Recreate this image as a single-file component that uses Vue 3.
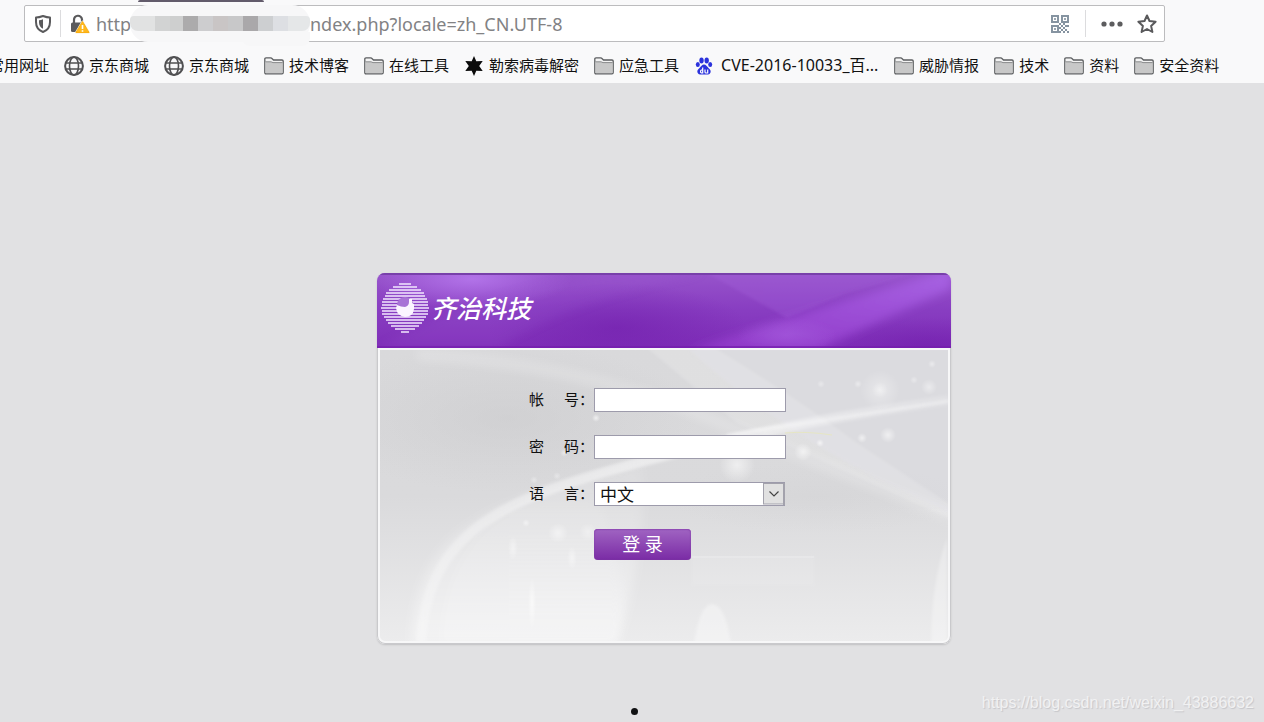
<script setup>
import { ref } from 'vue'

const address = ref('ndex.php?locale=zh_CN.UTF-8')
const account = ref('')
const password = ref('')
const language = ref('zh')

const bookmarks = [
  { icon: '', text: '常用网址' },
  { icon: 'globe', text: '京东商城' },
  { icon: 'globe', text: '京东商城' },
  { icon: 'folder', text: '技术博客' },
  { icon: 'folder', text: '在线工具' },
  { icon: 'star', text: '勒索病毒解密' },
  { icon: 'folder', text: '应急工具' },
  { icon: 'paw', text: 'CVE-2016-10033_百...', wide: true },
  { icon: 'folder', text: '威胁情报' },
  { icon: 'folder', text: '技术' },
  { icon: 'folder', text: '资料' },
  { icon: 'folder', text: '安全资料' }
]

const mosaic = [
  ['#e1e2e2', 25], ['#d2d3d3', 15], ['#cecfcf', 14], ['#acabac', 15], ['#cdcdcf', 15],
  ['#c9c5c5', 15], ['#c8c8c9', 15], ['#aaa8aa', 15], ['#cdcfd1', 16], ['#dddfe3', 15], ['#e5e7e8', 22]
]

const qr = [
  '1111.1111', '1..1.1..1', '1..1.1..1', '1111.1111', '....1.1..',
  '1111.1.11', '1..11.1..', '1..1.1.1.', '11111.1.1'
]
const qrCells = qr.flatMap((row, y) => [...row].map((c, x) => ({ c, x: x * 2, y: y * 2 }))).filter(p => p.c === '1')

const sparks = [
  [503, 117, 20, 0.5], [503, 117, 8, 0.5], [552, 114, 8, 0.6], [555, 91, 4, 0.6], [537, 107, 4, 0.5],
  [481, 111, 4, 0.6], [444, 111, 4, 0.5], [511, 162, 8, 0.8], [485, 165, 5, 0.8], [443, 170, 4, 0.9],
  [426, 179, 9, 0.8], [360, 192, 18, 0.8], [219, 145, 4, 0.9], [187, 180, 4, 0.7], [157, 207, 4, 0.5],
  [180, 203, 4, 0.5], [149, 250, 4, 0.7], [181, 260, 10, 0.7], [211, 259, 9, 0.5]
]

const rings = [
  [1, 6], [4, 12], [7, 16], [10, 19], [13, 20], [16, 22], [19, 23], [22, 23],
  [25, 24], [28, 23], [31, 23], [34, 21], [37, 19], [40, 17], [43, 14], [46, 10], [49, 4]
]
</script>

<template>
  <div class="page">
    <header class="browser">
      <div class="tab-edge"></div>
      <div class="urlbar">
        <button class="tool shield" aria-label="Tracking protection">
          <svg width="18" height="20" viewBox="0 0 18 20">
            <path d="M9 2 Q5 3.500 2 3.500 V8 C2 13 5 16.500 9 18 C13 16.500 16 13 16 8 V3.500 Q13 3.500 9 2Z" fill="none" stroke="#5a5a5c" stroke-width="2" stroke-linejoin="round" />
            <path d="M9 5.200 Q7 6.200 5 6.300 V8.500 C5 11.500 6.500 13.500 9 14.800Z" fill="#5a5a5c" />
          </svg>
        </button>
        <span class="rule"></span>
        <button class="tool lock" aria-label="Connection">
          <svg width="20" height="20" viewBox="0 0 20 20">
            <path d="M4 9 V6 A4 4 0 0 1 12 5.500 V9" fill="none" stroke="#5a5a5c" stroke-width="2.200" />
            <rect x="1" y="8.500" width="12.500" height="9.500" rx="1.500" fill="#5a5a5c" />
            <path d="M12.500 7.500 L19 18.500 H6 Z" fill="#ffb81c" stroke="#f8f0dc" stroke-width="2" stroke-linejoin="round" />
            <path d="M12.500 7.500 L19 18.500 H6 Z" fill="#ffb81c" stroke="#f9ae12" stroke-width="1" stroke-linejoin="round" />
            <path d="M12.500 11 V15 M12.500 16.200 V17.700" stroke="#fff" stroke-width="1.600" />
          </svg>
        </button>
        <label class="scheme" for="address">http</label>
        <span class="mask">
          <i v-for="(m, k) in mosaic" :key="k" :style="{ background: m[0], flexGrow: m[1] }"></i>
        </span>
        <input id="address" v-model="address" class="address" type="text" spellcheck="false" />
        <button class="tool" aria-label="QR code">
          <svg width="18" height="18" viewBox="0 0 18 18">
            <rect v-for="(p, k) in qrCells" :key="k" :x="p.x" :y="p.y" width="2" height="2" fill="#8694a1" />
            <path d="M3.500 3.500h1v1h-1z M13.500 3.500h1v1h-1z M3.500 13.500h1v1h-1z" fill="#75838f" stroke="#8694a1" />
          </svg>
        </button>
        <span class="rule right"></span>
        <button class="tool dots" aria-label="More">
          <svg width="22" height="6" viewBox="0 0 22 6" fill="#5c5c5e">
            <circle cx="3" cy="3" r="2.600" /><circle cx="11" cy="3" r="2.600" /><circle cx="19" cy="3" r="2.600" />
          </svg>
        </button>
        <button class="tool" aria-label="Bookmark">
          <svg width="20" height="20" viewBox="0 0 20 20">
            <path d="M10 1.500 L12.500 7 L18.600 7.700 L14.100 11.900 L15.400 18 L10 15 L4.600 18 L5.900 11.900 L1.400 7.700 L7.500 7 Z" fill="none" stroke="#5a5a5c" stroke-width="2" stroke-linejoin="round" />
          </svg>
        </button>
      </div>
      <nav class="bookmarks">
        <a v-for="(b, k) in bookmarks" :key="k" href="#" :class="{ wide: b.wide }">
          <svg v-if="b.icon === 'globe'" width="20" height="20" viewBox="0 0 20 20" fill="none" stroke="#505052" stroke-width="1.600">
            <circle cx="10" cy="10" r="8.900" stroke-width="2" />
            <ellipse cx="10" cy="10" rx="4.500" ry="8.900" />
            <path d="M1.500 7 H18.500 M1.500 13 H18.500" />
          </svg>
          <svg v-else-if="b.icon === 'folder'" width="20" height="20" viewBox="0 0 20 20">
            <path d="M.8 16.500 V3 Q.8 1.800 2 1.800 H6.500 Q7.500 1.800 8.500 3 L9.500 4 H18 Q19.200 4 19.200 5 V16.500 Q19.200 17.800 18 17.800 H2 Q.8 17.800 .8 16.500Z" fill="#f3f3f3" stroke="#5c5e60" stroke-width="1.300" />
            <path d="M1.500 6 H7 L9 6.800 H18.500 V17 H1.500Z" fill="#c8c8c8" />
            <path d="M1.500 5.800 H7 L9 6.600 H18.500" fill="none" stroke="#88898b" />
          </svg>
          <svg v-else-if="b.icon === 'star'" width="20" height="20" viewBox="0 0 20 20">
            <path d="M10 0 L12.300 5.300 L18.700 5 L15.200 10 L18.700 15 L12.300 14.700 L10 20 L7.700 14.700 L1.300 15 L4.800 10 L1.300 5 L7.700 5.300Z" fill="#0b0b0b" />
          </svg>
          <svg v-else-if="b.icon === 'paw'" width="20" height="20" viewBox="0 0 20 20" fill="#2b32dc">
            <ellipse cx="7.500" cy="4.500" rx="2.200" ry="2.900" />
            <ellipse cx="12.700" cy="4.500" rx="2.200" ry="2.900" />
            <ellipse cx="3.800" cy="8.500" rx="2" ry="2.600" />
            <ellipse cx="16.200" cy="8.500" rx="2" ry="2.600" />
            <path d="M10 8.500 C12 8.500 13 10.500 14.500 12 C16.500 13.800 17 15 16.500 16.500 C15.800 19 13 18.500 10 18.500 C7 18.500 4.200 19 3.500 16.500 C3 15 3.500 13.800 5.500 12 C7 10.500 8 8.500 10 8.500Z" />
            <path d="M8.700 11.500 V17 H7.500 A1.600 1.600 0 1 1 8.700 14 M11 13.500 V16 Q11 17 12 17 H13.700 V13.500" fill="none" stroke="#fff" stroke-width="1.200" />
          </svg>
          <span>{{ b.text }}</span>
        </a>
      </nav>
    </header>

    <main class="stage">
      <section class="card">
        <svg class="art" viewBox="0 0 574 371" preserveAspectRatio="none" aria-hidden="true">
          <defs>
            <linearGradient id="purple" x1="0" y1="0" x2="0" y2="1">
              <stop offset="0" stop-color="#9754cb" /><stop offset=".5" stop-color="#883dc1" /><stop offset="1" stop-color="#7f2eb8" />
            </linearGradient>
            <linearGradient id="grey" x1="0" y1="0" x2="0" y2="1">
              <stop offset="0" stop-color="#d9d9db" /><stop offset=".5" stop-color="#dadadc" /><stop offset="1" stop-color="#ececed" />
            </linearGradient>
            <linearGradient id="beam" x1="0" y1="1" x2="1" y2="0">
              <stop offset="0" stop-color="#a848de" stop-opacity=".4" /><stop offset="1" stop-color="#b06cf0" stop-opacity=".65" />
            </linearGradient>
            <linearGradient id="veil" x1="0" y1="0" x2="0" y2="1">
              <stop offset="0" stop-color="#fff" stop-opacity=".08" /><stop offset="1" stop-color="#fff" stop-opacity=".38" />
            </linearGradient>
            <linearGradient id="streak" x1="0" y1="0" x2="1" y2="0">
              <stop offset="0" stop-color="#fff" stop-opacity=".25" /><stop offset=".5" stop-color="#fff" stop-opacity=".5" /><stop offset="1" stop-color="#fff" stop-opacity=".15" />
            </linearGradient>
            <radialGradient id="spark"><stop offset="0" stop-color="#fff" stop-opacity=".7" /><stop offset="1" stop-color="#fff" stop-opacity="0" /></radialGradient>
            <radialGradient id="shade"><stop offset="0" stop-color="#c7c7c9" stop-opacity=".6" /><stop offset="1" stop-color="#c7c7c9" stop-opacity="0" /></radialGradient>
            <radialGradient id="glow"><stop offset="0" stop-color="#b97bf0" stop-opacity=".8" /><stop offset="1" stop-color="#b97bf0" stop-opacity="0" /></radialGradient>
            <radialGradient id="dark"><stop offset="0" stop-color="#701cab" stop-opacity=".55" /><stop offset="1" stop-color="#701cab" stop-opacity="0" /></radialGradient>
            <filter id="soft" x="-20%" y="-20%" width="140%" height="140%"><feGaussianBlur stdDeviation="5" /></filter>
            <filter id="fine" x="-20%" y="-20%" width="140%" height="140%"><feGaussianBlur stdDeviation="1.500" /></filter>
            <clipPath id="head"><rect width="574" height="75" /></clipPath>
            <clipPath id="body"><rect y="75" width="574" height="296" /></clipPath>
          </defs>
          <g clip-path="url(#head)">
            <rect width="574" height="75" fill="url(#purple)" />
            <ellipse cx="95" cy="6" rx="100" ry="30" fill="url(#glow)" />
            <ellipse cx="240" cy="55" rx="130" ry="45" fill="url(#dark)" />
            <path d="M330 0 L410 45 L470 20 L574 -10 L574 -20 H330Z" fill="#a663dc" opacity=".3" filter="url(#fine)" />
            <ellipse cx="550" cy="72" rx="110" ry="28" fill="url(#dark)" />
            <path d="M310 78 Q420 42 574 -4 V16 Q500 48 440 78Z" fill="url(#beam)" filter="url(#soft)" />
            <ellipse cx="410" cy="62" rx="50" ry="18" fill="url(#glow)" opacity=".35" />
            <path d="M0 75 Q110 15 240 0 H330 Q200 25 120 75Z" fill="#a160d8" opacity=".16" filter="url(#soft)" />
            <rect width="574" height="2" fill="#7840aa" />
            <rect y="73" width="574" height="2" fill="#751cae" opacity=".7" />
          </g>
          <g clip-path="url(#body)">
            <rect y="75" width="574" height="296" fill="url(#grey)" />
            <path d="M310 75 H574 V240 Q420 175 310 75Z" fill="#dddce2" opacity=".6" filter="url(#fine)" />
            <ellipse cx="130" cy="145" rx="190" ry="75" fill="url(#shade)" opacity=".8" />
            <ellipse cx="440" cy="225" rx="150" ry="35" fill="url(#shade)" opacity=".3" />
            <path d="M270 75 H338 Q420 125 480 170 L574 232 V246 Q450 190 360 150Z" fill="#fff" opacity=".16" filter="url(#fine)" />
            <path d="M40 82 Q200 90 332 145 T574 243" fill="none" stroke="#fff" stroke-width="12" opacity=".18" filter="url(#soft)" />
            <path d="M34 371 C38 255 105 230 264 189 C270 240 260 310 240 371Z" fill="url(#veil)" filter="url(#soft)" />
            <path d="M62 371 C68 280 110 230 210 205 Q260 300 240 371Z" fill="url(#veil)" opacity=".5" filter="url(#soft)" />
            <path d="M44 371 C50 255 130 225 264 189 S470 142 572 127" fill="none" stroke="url(#streak)" stroke-width="10" filter="url(#fine)" />
            <path d="M350 162 Q460 145 572 128" fill="none" stroke="#fff" stroke-width="2" opacity=".5" filter="url(#fine)" />
            <path d="M408 160 Q430 158 455 162" fill="none" stroke="#e6e6c4" stroke-width="1" />
            <path d="M554 371 Q554 310 570 265 V371Z" fill="#fff" opacity=".3" filter="url(#fine)" />
            <path d="M317 371 Q323 331 335 331 Q348 331 354 371Z" fill="#fff" opacity=".35" filter="url(#fine)" />
            <path d="M315 284 H437 V312 H315Z" fill="#fff" opacity=".08" filter="url(#fine)" />
            <path d="M315 284 H437" stroke="#fff" opacity=".2" stroke-width="2" />
            <ellipse cx="136" cy="275" rx="5" ry="12" fill="url(#spark)" opacity=".6" />
            <ellipse cx="195" cy="285" rx="5" ry="12" fill="url(#spark)" opacity=".6" />
            <ellipse cx="155" cy="330" rx="4" ry="26" fill="url(#spark)" opacity=".8" />
            <circle v-for="(s, k) in sparks" :key="k" :cx="s[0]" :cy="s[1]" :r="s[2]" :opacity="s[3]" fill="url(#spark)" />
          </g>
        </svg>

        <div class="brand">
          <svg width="48" height="51" viewBox="0 0 48 51" aria-hidden="true">
            <path v-for="r in rings" :key="r[0]" :d="`M${24 - r[1]} ${r[0]} H${24 + r[1]}`" stroke="#f3e8ff" stroke-width="1.700" />
            <circle cx="24" cy="22" r="8" fill="#a873d6" />
            <path d="M16 22 Q20 24 24 24 Q28 23 28 19 V16 H31 V20 L33 21 V26 Q32 34 24 34 Q16 33 15 25Z" fill="#fbf5ff" />
          </svg>
          <h1>齐治科技</h1>
        </div>

        <form class="login" @submit.prevent>
          <label for="account"><span>帐</span><span>号：</span></label>
          <input id="account" v-model="account" type="text" />
          <label for="password"><span>密</span><span>码：</span></label>
          <input id="password" v-model="password" type="password" />
          <label for="language"><span>语</span><span>言：</span></label>
          <div class="picker">
            <select id="language" v-model="language">
              <option value="zh">中文</option>
            </select>
            <svg width="22" height="22" viewBox="0 0 22 22" aria-hidden="true">
              <rect x=".5" y=".5" width="20" height="20.500" fill="#e1e1e1" stroke="#a3a2ac" stroke-width="1" />
              <path d="M21 0 V22" stroke="#a3a2ac" stroke-width="2" />
              <path d="M6.500 8.500 L11 13 L15.500 8.500" fill="none" stroke="#444" stroke-width="1.200" />
            </svg>
          </div>
          <button type="submit">登 录</button>
        </form>
      </section>
      <span class="dot"></span>
      <span class="watermark">https://blog.csdn.net/weixin_43886632</span>
    </main>
  </div>
</template>

<style>
body {
  background: #e1e1e3;
}
</style>

<style scoped>
* {
  box-sizing: border-box;
}
.page {
  min-height: 100vh;
  display: flex;
  flex-direction: column;
  overflow: hidden;
  font-family: "Noto Sans", "Noto Sans CJK SC", sans-serif;
}
button {
  border: 0;
  padding: 0;
  font: inherit;
  cursor: pointer;
}
svg {
  display: block;
  flex: none;
}
.browser {
  position: relative;
  background: #f9f9fa;
  padding: 5px 0 1px;
}
.tab-edge {
  position: absolute;
  left: 138px;
  top: 0;
  width: 126px;
  height: 2px;
  background: #625b6b;
  border-radius: 8px 8px 0 0;
}
.urlbar {
  display: flex;
  align-items: center;
  height: 37px;
  margin: 0 99px 0 24px;
  padding: 0 7px 0 9px;
  background: #fff;
  border: 1px solid #bcbcbe;
  border-radius: 2px;
}
.tool {
  background: none;
  flex: none;
}
.rule {
  width: 1px;
  height: 27px;
  margin: 0 9px 0 8px;
  background: #dcdcde;
}
.rule.right {
  margin: 0 15px 0 16px;
}
.dots {
  margin-right: 14px;
}
.scheme,
.address {
  font-size: 18px;
  line-height: 24px;
  color: #828284;
}
.scheme {
  width: 34px;
  margin-left: 6px;
}
.mask {
  position: relative;
  z-index: 1;
  display: flex;
  flex: none;
  width: 180px;
  height: 37px;
  padding: 11px 0;
  background: #f7f7f8;
  border-radius: 18px;
}
.mask::after {
  content: "";
  position: absolute;
  right: 0;
  bottom: -4px;
  width: 68px;
  height: 14px;
  background: #f7f7f8;
  border-radius: 0 0 8px 8px;
}
.mask i {
  flex: 1 1 0;
}
.mask i:first-child {
  border-radius: 4px 0 0 8px;
}
.mask i:last-of-type {
  border-radius: 0 4px 8px 0;
}
.address {
  flex: 1;
  min-width: 0;
  padding: 0;
  border: 0;
  outline: 0;
  background: transparent;
  font-family: inherit;
}
.bookmarks {
  display: flex;
  align-items: center;
  gap: 15px;
  height: 40px;
  padding-top: 8px;
  margin-left: -11px;
}
.bookmarks a {
  display: flex;
  align-items: center;
  gap: 5px;
  flex: none;
  color: #111;
  font-size: 15px;
  line-height: 20px;
  text-decoration: none;
  white-space: nowrap;
}
.bookmarks span {
  padding-bottom: 2px;
}
.bookmarks .wide {
  width: 185px;
  gap: 7px;
  font-size: 16px;
}
.stage {
  position: relative;
  flex: 1;
  display: flex;
  flex-direction: column;
  align-items: center;
  padding: 190px 0 0 64px;
  background: #e1e1e3;
}
.card {
  position: relative;
  width: 574px;
  max-width: 100%;
  overflow: hidden;
  border-radius: 8px;
  box-shadow: 0 1px 2px #c0c0c3;
  padding-bottom: 84px;
}
.card::after {
  content: "";
  position: absolute;
  inset: 75px 0 0;
  border: 1px solid #c9c9cc;
  border-top: 0;
  border-radius: 0 0 8px 8px;
  box-shadow: inset 0 0 0 2px #f7f7f8;
  pointer-events: none;
}
.art {
  position: absolute;
  inset: 0;
  width: 100%;
  height: 100%;
}
.brand {
  position: relative;
  display: flex;
  align-items: center;
  gap: 2px;
  height: 75px;
  padding: 0 0 5px 4px;
}
.brand h1 {
  margin: 0;
  color: #fff;
  font-size: 25px;
  line-height: 30px;
  font-style: italic;
  font-weight: 500;
}
.login {
  position: relative;
  display: grid;
  grid-template-columns: 65px 192px;
  row-gap: 23px;
  padding: 40px 0 0 152px;
  align-items: center;
}
.login label {
  display: flex;
  justify-content: space-between;
  padding-bottom: 2px;
  font-size: 15px;
  line-height: 20px;
  color: #111;
}
.login input,
.login select {
  width: 100%;
  height: 24px;
  border: 1px solid #9d9bab;
  border-radius: 0;
  background: #fff;
  padding: 0 5px;
  font-family: inherit;
  font-size: 17px;
  line-height: 22px;
  color: #111;
  outline: 0;
}
.login select {
  display: block;
  appearance: none;
  padding-top: 1px;
}
.picker {
  position: relative;
  margin-right: 1px;
}
.picker svg {
  position: absolute;
  right: 0;
  top: 1px;
  pointer-events: none;
}
.login button {
  grid-column: 2;
  width: 97px;
  height: 31px;
  border-radius: 4px;
  background: linear-gradient(#a064c2, #7a2ba5);
  box-shadow: inset 0 1px 1px #8f4bb5, inset 0 0 2px #7c3a9f;
  color: #fff;
  font-size: 18px;
  line-height: 31px;
}
.dot {
  position: absolute;
  left: 50%;
  bottom: 7px;
  width: 7px;
  height: 7px;
  margin-left: -1px;
  border-radius: 50%;
  background: #101113;
}
.watermark {
  position: absolute;
  right: 10px;
  bottom: 9px;
  font-family: "Liberation Sans", sans-serif;
  font-size: 16px;
  line-height: 20px;
  color: #f1f1f2;
  text-shadow: 1px 1px 1px #c6c6ca;
}
</style>
